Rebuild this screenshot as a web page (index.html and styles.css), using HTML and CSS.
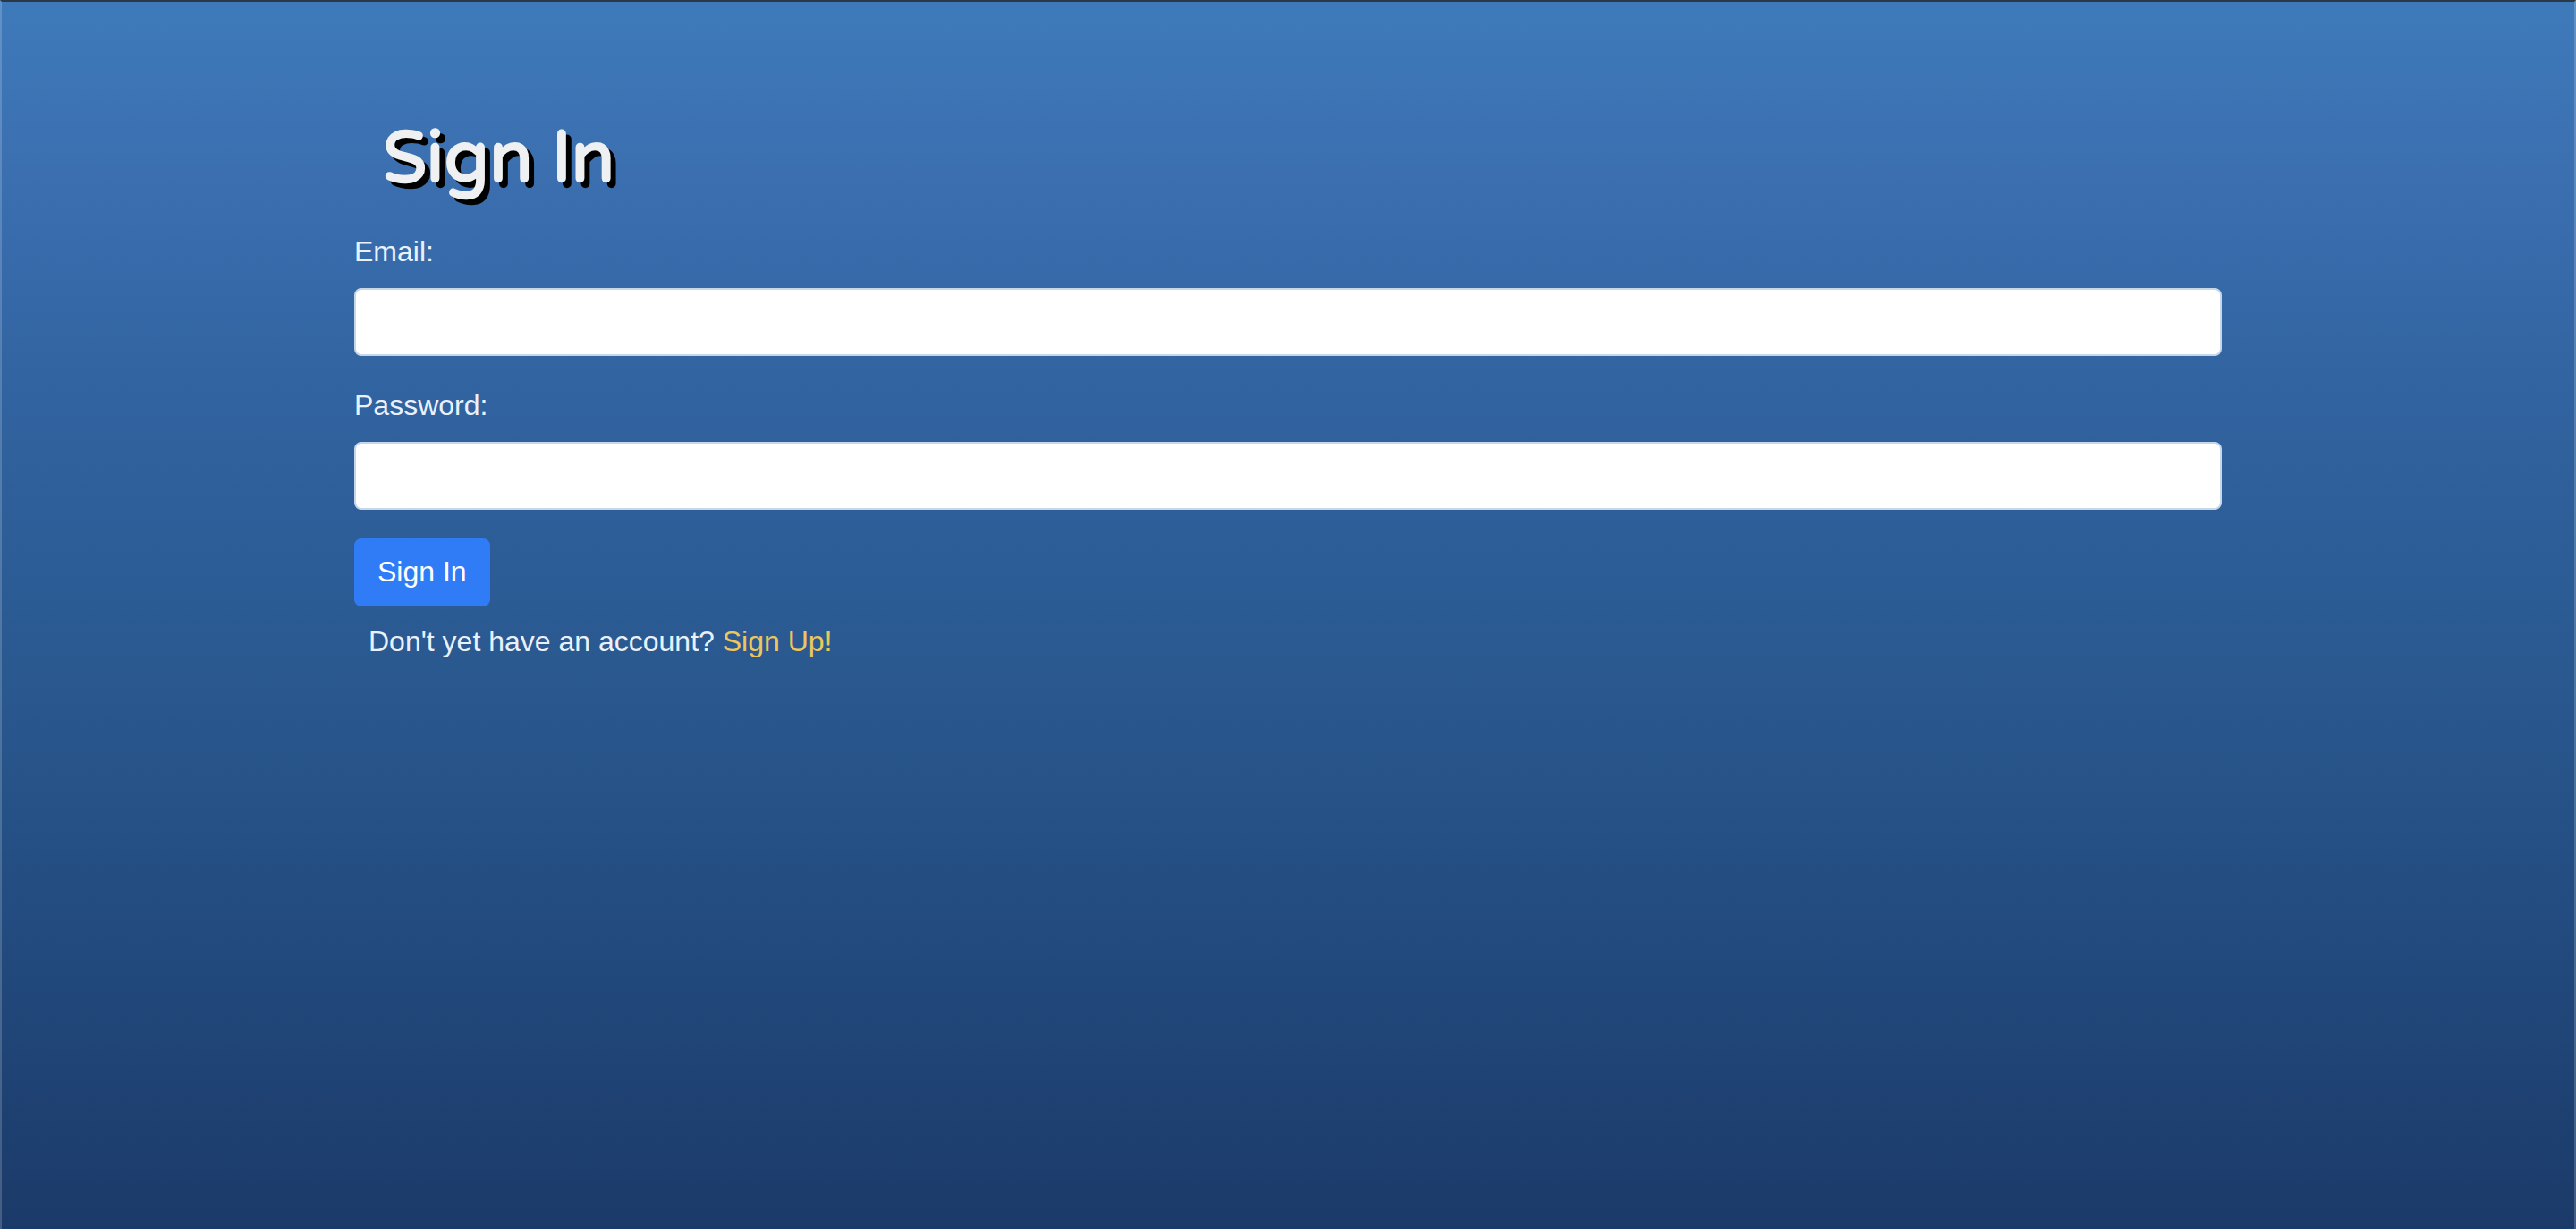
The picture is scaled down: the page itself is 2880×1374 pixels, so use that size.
FILE: index.html
```html
<!DOCTYPE html>
<html lang="en">
<head>
  <meta charset="utf-8">
  <meta name="viewport" content="width=device-width, initial-scale=1">
  <title>Sign In</title>
  <link rel="stylesheet" href="styles.css">
</head>
<body>
  <main class="container">
    <h1 class="title">Sign In</h1>
    <form class="form">
      <div class="field">
        <label for="email">Email:</label>
        <input id="email" name="email" type="email">
      </div>
      <div class="field">
        <label for="password">Password:</label>
        <input id="password" name="password" type="password">
      </div>
      <button class="button" type="submit">Sign In</button>
    </form>
    <p class="signup">Don't yet have an account? <a href="#signup">Sign Up!</a></p>
  </main>
</body>
</html>
```
FILE: styles.css
```css
*,
*::before,
*::after {
  box-sizing: border-box;
}

body {
  margin: 0;
  min-height: 100vh;
  border: 2px solid rgba(255, 255, 255, 0.18);
  border-top-color: #2b3846;
  border-bottom: 0;
  background: linear-gradient(#3e7aba, #3b6fb0 14%, #3163a0 32%, #2a5990 54%, #234c80 74%, #1b3a69) border-box;
  color: #e9f1fc;
  font-family: "Liberation Sans", Arial, sans-serif;
  font-size: 32px;
  line-height: 46px;
}

.container {
  max-width: 2280px;
  margin: 0 auto;
  padding: 128px 96px 96px;
}

.title {
  margin: 0 0 32px;
  padding-left: 32px;
  color: #eff0f2;
  font-family: "Varela Round", Quicksand, Lato, sans-serif;
  font-size: 80px;
  font-weight: 700;
  line-height: 96px;
  text-shadow: 6px 6px #000;
}

.form {
  display: flex;
  flex-direction: column;
  align-items: flex-start;
  gap: 32px;
}

.field {
  display: flex;
  flex-direction: column;
  gap: 18px;
  width: 100%;
}

.field input {
  width: 100%;
  height: 76px;
  padding: 12px 24px;
  border: 2px solid #c8d7e8;
  border-radius: 8px;
  background: #fff;
  color: #495057;
  font: inherit;
}

.button {
  padding: 12px 24px 14px;
  border: 2px solid #307cf6;
  border-radius: 8px;
  background: #307cf6;
  color: #fff;
  font: inherit;
}

.signup {
  margin: 16px 0 0;
  padding-left: 16px;
}

.signup a {
  color: #edc65c;
  text-decoration: none;
}
```
